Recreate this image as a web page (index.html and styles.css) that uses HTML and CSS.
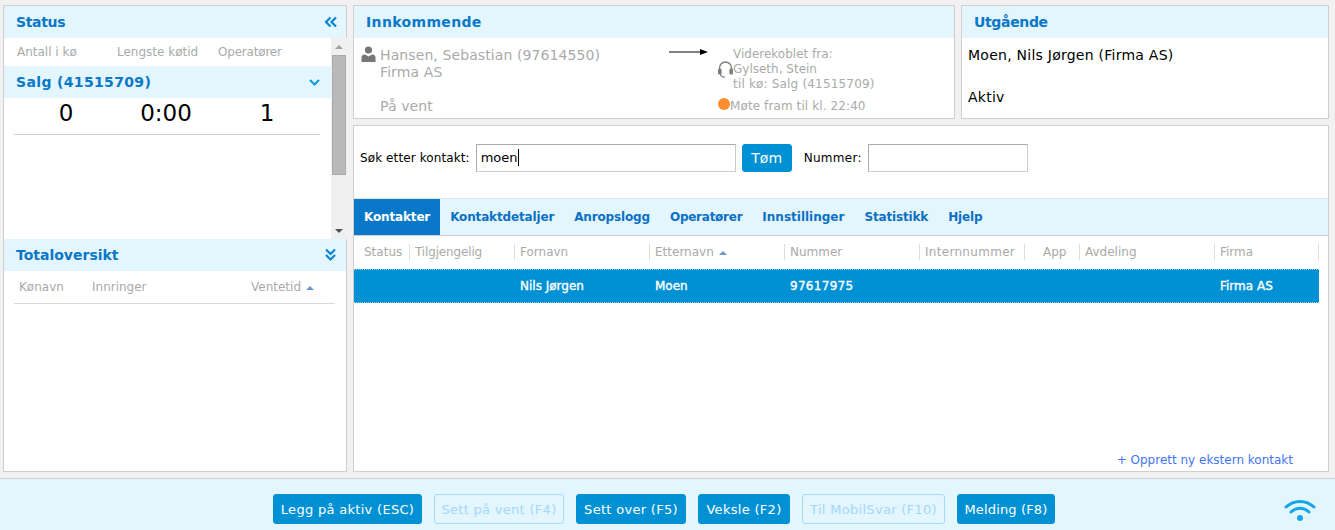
FILE: index.html

```html
<!DOCTYPE html>
<html>
<head>
  <meta charset="UTF-8">
  <title>Sentralbord</title>
  <link rel="stylesheet" href="styles.css">
</head>
<body>

<div class="app">
  <div class="workspace">

    <div class="panel left">
      <div class="head">
        <h2 class="tight">Status</h2>
        <svg class="ico-collapse" width="14" height="12" viewBox="0 0 14 12"><path d="M6.500 1.500 2 6l4.500 4.500M12 1.500 7.500 6l4.500 4.500" fill="none" stroke="#0a86cf" stroke-width="2.200"/></svg>
      </div>
      <div class="queues">
        <div class="queue-list">
          <div class="queue-labels"><span>Antall i kø</span><span>Lengste køtid</span><span>Operatører</span></div>
          <div class="queue-head">
            <h3>Salg (41515709)</h3>
            <svg width="11" height="7" viewBox="0 0 11 7"><path d="M1 1l4.500 4.500L10 1" fill="none" stroke="#0a9be0" stroke-width="2"/></svg>
          </div>
          <div class="queue-values"><span>0</span><span>0:00</span><span>1</span></div>
        </div>
        <div class="scrollbar">
          <div class="arrow up"></div>
          <div class="track"><div class="thumb"></div></div>
          <div class="arrow down"></div>
        </div>
      </div>
      <div class="head">
        <h2>Totaloversikt</h2>
        <svg class="ico-expand" width="11" height="14" viewBox="0 0 11 14"><path d="M1 1.500 5.500 6 10 1.500M1 7l4.500 4.500L10 7" fill="none" stroke="#0a86cf" stroke-width="2.200"/></svg>
      </div>
      <div class="total-cols">
        <span class="c-name">Kønavn</span>
        <span class="c-calls">Innringer</span>
        <span class="c-wait">Ventetid <i class="sort"></i></span>
      </div>
    </div>

    <div class="right">
      <div class="top">
        <div class="panel incoming">
          <div class="head"><h2 class="wide-title">Innkommende</h2></div>
          <div class="call">
            <div class="caller">
              <svg class="person" width="15" height="16" viewBox="0 0 15 16"><circle cx="7.500" cy="4" r="3.600" fill="#777"/><path d="M0.500 16v-4.500c0-2 1.500-3 3.500-3l3.500 2 3.500-2c2 0 3.500 1 3.500 3V16z" fill="#777"/></svg>
              <div class="caller-text">
                <div>Hansen, Sebastian (97614550)</div>
                <div>Firma AS</div>
                <div class="hold">På vent</div>
              </div>
            </div>
            <svg class="arrow-line" width="39" height="6" viewBox="0 0 39 6"><path d="M0 3h32" stroke="#000" stroke-width="1"/><path d="M31 0l8 3-8 3z" fill="#000"/></svg>
            <div class="transfer">
              <div class="transfer-row">
                <svg width="15" height="17" viewBox="0 0 15 17"><path d="M1.500 9V7a6 6 0 0 1 12 0V9" fill="none" stroke="#7d7d7d" stroke-width="1.400"/><rect x="0" y="7.500" width="3.600" height="6" rx="1.500" fill="#7d7d7d"/><rect x="11.400" y="7.500" width="3.600" height="6" rx="1.500" fill="#7d7d7d"/><path d="M2.500 13c0 2 1.500 3.200 4.500 3.200" fill="none" stroke="#7d7d7d" stroke-width="1.200"/></svg>
                <div>Viderekoblet fra:<br>Gylseth, Stein<br><span class="to-queue">til kø: Salg (41515709)</span></div>
              </div>
              <div class="meeting"><i class="dot"></i><span>Møte fram til kl. 22:40</span></div>
            </div>
          </div>
        </div>
        <div class="panel outgoing">
          <div class="head"><h2 class="tight">Utgående</h2></div>
          <div class="out-body">
            <div>Moen, Nils Jørgen (Firma AS)</div>
            <div>Aktiv</div>
          </div>
        </div>
      </div>

      <div class="panel contacts">
        <div class="search">
          <label>Søk etter kontakt:</label>
          <div class="field wide">moen<span class="caret"></span></div>
          <button class="btn clear">Tøm</button>
          <label class="num-label">Nummer:</label>
          <div class="field narrow"></div>
        </div>
        <div class="tabs">
          <a class="active">Kontakter</a>
          <a>Kontaktdetaljer</a>
          <a>Anropslogg</a>
          <a class="tab-ops">Operatører</a>
          <a class="tab-settings">Innstillinger</a>
          <a>Statistikk</a>
          <a>Hjelp</a>
        </div>
        <div class="grid-row cols">
          <span class="status-col">Status</span>
          <span class="avail-col">Tilgjengelig</span>
          <span>Fornavn</span>
          <span>Etternavn <i class="sort"></i></span>
          <span>Nummer</span>
          <span class="intern-col">Internnummer</span>
          <span class="app-col">App</span>
          <span>Avdeling</span>
          <span>Firma</span>
        </div>
        <div class="grid-row selected">
          <span></span>
          <span></span>
          <span>Nils Jørgen</span>
          <span>Moen</span>
          <span class="phone">97617975</span>
          <span></span>
          <span></span>
          <span></span>
          <span>Firma AS</span>
        </div>
        <a class="new-contact">+ Opprett ny ekstern kontakt</a>
      </div>
    </div>
  </div>

  <div class="footer">
    <button class="btn b-hangup">Legg på aktiv (ESC)</button>
    <button class="btn off b-hold">Sett på vent (F4)</button>
    <button class="btn b-transfer">Sett over (F5)</button>
    <button class="btn b-swap">Veksle (F2)</button>
    <button class="btn off b-mobile">Til MobilSvar (F10)</button>
    <button class="btn b-message">Melding (F8)</button>
    <svg class="wifi" width="32" height="24" viewBox="0 0 32 24"><path d="M2 9c8-7.500 20-7.500 28 0M7 14c5.500-5 12.500-5 18 0" fill="none" stroke="#12a5ea" stroke-width="3" stroke-linecap="round"/><circle cx="16" cy="20" r="3" fill="#12a5ea"/></svg>
  </div>
</div>

</body>
</html>
```

FILE: styles.css

```css
* {
  box-sizing: border-box;
}
body {
  margin: 0;
  background: #f1f1f1;
  font-family: "DejaVu Sans", Verdana, sans-serif;
  font-size: 12px;
  color: #000;
  overflow: hidden;
}
.app {
  height: 530px;
  display: flex;
  flex-direction: column;
}
.workspace {
  display: flex;
  gap: 6px;
  height: 478px;
  padding: 5px 6px 6px 3px;
}
.panel {
  background: #fff;
  border: 1px solid #cfcfcf;
}
.left {
  width: 344px;
  flex: none;
  display: flex;
  flex-direction: column;
}
.head {
  height: 32px;
  flex: none;
  display: flex;
  align-items: center;
  justify-content: space-between;
  background: #e3f5fd;
  padding: 0 9px 0 12px;
}
.head h2 {
  margin: 0;
  font-size: 14px;
  font-weight: bold;
  color: #0a78c8;
}
.head h2.tight {
  letter-spacing: -0.35px;
}
.head h2.wide-title {
  letter-spacing: 0.35px;
}
.ico-collapse {
  margin-right: -1px;
}
.ico-expand {
  margin-right: 1px;
}
.queues {
  height: 201px;
  flex: none;
  display: flex;
}
.queue-list {
  flex: 1;
}
.queue-labels {
  height: 28px;
  display: flex;
  align-items: center;
  padding-left: 13px;
  color: #aaa;
}
.queue-labels span:nth-child(1) {
  width: 100px;
}
.queue-labels span:nth-child(2) {
  width: 101px;
}
.queue-labels span:nth-child(3) {
  letter-spacing: -0.2px;
}
.queue-head {
  height: 32px;
  display: flex;
  align-items: center;
  justify-content: space-between;
  padding: 0 11px 0 12px;
  background: #e3f5fd;
}
.queue-head h3 {
  margin: 0;
  font-size: 14px;
  letter-spacing: 0.35px;
  color: #0a78c8;
}
.queue-values {
  height: 37px;
  margin: 0 11px 0 10px;
  padding-bottom: 6px;
  display: flex;
  align-items: center;
  border-bottom: 1px solid #cfcfcf;
  font-size: 23px;
}
.queue-values span {
  text-align: center;
}
.queue-values span:nth-child(1) {
  width: 104px;
}
.queue-values span:nth-child(2) {
  width: 96px;
}
.queue-values span:nth-child(3) {
  width: 106px;
}
.scrollbar {
  width: 16px;
  flex: none;
  background: #f0f0f0;
  display: flex;
  flex-direction: column;
}
.scrollbar .track {
  flex: 1;
  padding: 0 1px;
}
.thumb {
  height: 120px;
  background: #b9b9b9;
  border: 1px solid #aaa;
}
.arrow {
  height: 17px;
  flex: none;
  display: flex;
  align-items: center;
  justify-content: center;
}
.arrow::after {
  content: "";
  border-left: 4px solid transparent;
  border-right: 4px solid transparent;
}
.arrow.up::after {
  border-bottom: 4px solid #a0a0a0;
}
.arrow.down::after {
  border-top: 4px solid #505050;
}
.total-cols {
  margin: 0 11px 0 10px;
  height: 33px;
  display: flex;
  align-items: center;
  border-bottom: 1px solid #d8d8d8;
  color: #aaa;
}
.c-name {
  width: 78px;
  padding-left: 5px;
}
.c-calls {
  width: 159px;
}
.sort {
  display: inline-block;
  margin-left: 1px;
  vertical-align: 1px;
  border-left: 4px solid transparent;
  border-right: 4px solid transparent;
  border-bottom: 4px solid #6b98d0;
}
.right {
  flex: 1;
  display: flex;
  flex-direction: column;
  gap: 6px;
}
.top {
  height: 114px;
  flex: none;
  display: flex;
  gap: 6px;
}
.incoming {
  width: 602px;
  flex: none;
}
.outgoing {
  flex: 1;
}
.call {
  display: flex;
  color: #aaa;
}
.caller {
  width: 315px;
  display: flex;
  padding: 7px 0 0 7px;
  font-size: 14px;
  line-height: 17px;
  letter-spacing: 0.1px;
}
.person {
  margin-top: 1px;
  margin-right: 4px;
  flex: none;
}
.caller-text {
  padding-top: 2px;
}
.hold {
  margin-top: 17px;
}
.arrow-line {
  margin-top: 11px;
  flex: none;
}
.transfer {
  margin-left: 10px;
  padding-top: 9px;
  line-height: 15px;
}
.transfer-row {
  display: flex;
  align-items: center;
}
.transfer-row svg {
  flex: none;
}
.to-queue {
  letter-spacing: 0.18px;
}
.meeting {
  display: flex;
  align-items: center;
  margin-top: 7px;
  letter-spacing: 0.1px;
}
.dot {
  width: 12px;
  height: 12px;
  border-radius: 50%;
  background: #ff8c2f;
  position: relative;
  top: -3px;
}
.out-body {
  padding: 9px 6px 0;
  font-size: 14px;
  letter-spacing: 0.25px;
  display: flex;
  flex-direction: column;
  gap: 26px;
}
.contacts {
  flex: 1;
  position: relative;
}
.search {
  height: 72px;
  display: flex;
  align-items: center;
  padding: 0 6px 8px;
}
.search label {
  letter-spacing: 0.1px;
}
.search .num-label {
  margin-left: 12px;
  letter-spacing: 0.3px;
}
.field {
  height: 28px;
  background: #fff;
  border: 1px solid #aaa;
  border-bottom-color: #ccc;
  border-right-color: #ccc;
  font-size: 13px;
  line-height: 26px;
  padding-left: 4px;
}
.wide {
  width: 260px;
  margin-left: 6px;
}
.narrow {
  width: 160px;
  margin-left: 6px;
}
.caret {
  display: inline-block;
  width: 1px;
  height: 17px;
  background: #000;
  vertical-align: -4px;
}
.btn {
  height: 30px;
  padding: 0;
  border: 1px solid #0090d4;
  border-radius: 3px;
  background: #0090d4;
  color: #fff;
  font-family: inherit;
  font-size: 13px;
  letter-spacing: 0.3px;
}
.btn.off {
  background: #e3f5fd;
  border-color: #a5d8fa;
  color: #a5d8fa;
}
.b-hangup {
  width: 149px;
}
.b-hold {
  width: 130px;
}
.b-transfer {
  width: 110px;
}
.b-swap {
  width: 92px;
}
.b-mobile {
  width: 143px;
}
.b-message {
  width: 98px;
  letter-spacing: 0.15px;
}
.clear {
  height: 28px;
  width: 50px;
  margin-left: 6px;
  font-size: 14px;
  letter-spacing: 0;
}
.tabs {
  height: 38px;
  display: flex;
  background: #e3f5fd;
  border-top: 1px solid #e4e4e4;
  border-bottom: 1px solid #cfcfcf;
}
.tabs a {
  padding: 0 10px;
  line-height: 36px;
  font-weight: bold;
  letter-spacing: -0.15px;
  color: #0a70c4;
}
.tabs a.active {
  background: #0a78c8;
  color: #fff;
}
.tabs .tab-ops {
  letter-spacing: -0.25px;
}
.tabs .tab-settings {
  letter-spacing: 0;
}
.grid-row {
  display: grid;
  grid-template-columns: 56px 105px 135px 135px 135px 105px 55px 135px 104px;
  width: 965px;
}
.cols {
  height: 33px;
  padding-bottom: 2px;
  align-items: center;
  color: #aaa;
}
.cols span {
  height: 16px;
  line-height: 16px;
  padding-left: 5px;
  border-right: 1px solid #ddd;
}
.cols .status-col {
  padding-left: 10px;
}
.cols .avail-col {
  letter-spacing: -0.15px;
}
.cols .intern-col {
  letter-spacing: 0.3px;
}
.cols .app-col {
  padding-left: 18px;
}
.selected {
  height: 34px;
  align-items: center;
  background: #0090d4;
  border-top: 1px dotted #a9c8e8;
  border-bottom: 1px dotted #a9c8e8;
  color: #fff;
  -webkit-text-stroke: 0.35px #fff;
}
.selected span {
  padding-left: 5px;
}
.selected .phone {
  letter-spacing: 0.3px;
}
.new-contact {
  position: absolute;
  right: 35px;
  bottom: 4px;
  color: #3f74f5;
}
.footer {
  flex: 1;
  display: flex;
  align-items: flex-start;
  gap: 12px;
  padding: 15px 0 0 273px;
  background: #e3f5fd;
  border-top: 1px solid #cfcfcf;
  position: relative;
}
.wifi {
  position: absolute;
  right: 19px;
  top: 19px;
}
```
